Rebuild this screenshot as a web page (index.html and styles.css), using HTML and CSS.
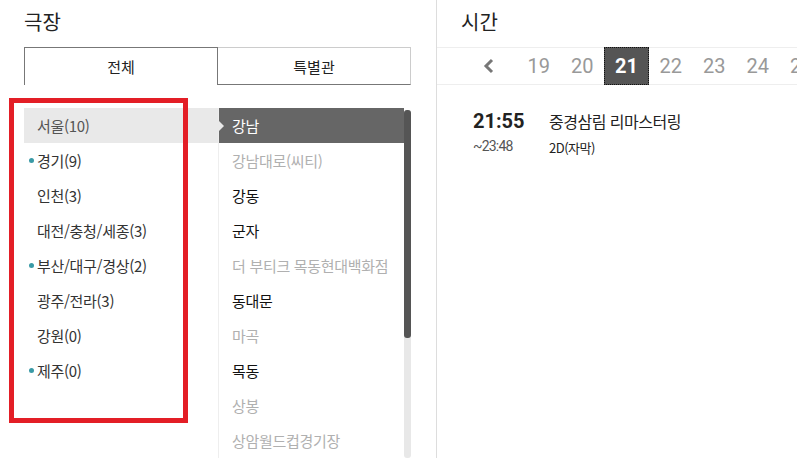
FILE: index.html
```html
<!DOCTYPE html>
<html lang="ko">
  <head>
    <meta charset="UTF-8" />
    <meta name="viewport" content="width=device-width, initial-scale=1.0" />
    <title>예매 | 극장 선택</title>
    <link rel="stylesheet" href="styles.css">
  </head>
  <body>
    <div class="page">
      <section class="theater">
        <h2 class="title">극장</h2>
        <div class="tabs">
          <div class="tab active">전체</div>
          <div class="tab">특별관</div>
        </div>
        <div class="lists">
          <ul class="regions">
            <li class="on">서울(10)</li>
            <li class="dot">경기(9)</li>
            <li>인천(3)</li>
            <li>대전/충청/세종(3)</li>
            <li class="dot">부산/대구/경상(2)</li>
            <li>광주/전라(3)</li>
            <li>강원(0)</li>
            <li class="dot">제주(0)</li>
          </ul>
          <div class="cinemas">
            <ul class="cinema-list">
              <li class="on">강남</li>
              <li class="off">강남대로(씨티)</li>
              <li>강동</li>
              <li>군자</li>
              <li class="off">더 부티크 목동현대백화점</li>
              <li>동대문</li>
              <li class="off">마곡</li>
              <li>목동</li>
              <li class="off">상봉</li>
              <li class="off">상암월드컵경기장</li>
            </ul>
            <div class="scroll"><div class="thumb"></div></div>
          </div>
        </div>
        <!-- annotation box -->
        <div class="mark"></div>
      </section>

      <section class="time">
        <h2 class="title">시간</h2>
        <div class="dates">
          <div class="prev">
            <svg width="12" height="16" viewBox="0 0 12 16">
              <path d="M9 2 L3 8 L9 14" fill="none" stroke="#777" stroke-width="3" />
            </svg>
          </div>
          <div class="day">19</div>
          <div class="day">20</div>
          <div class="day active">21</div>
          <div class="day">22</div>
          <div class="day">23</div>
          <div class="day">24</div>
          <div class="day">25</div>
        </div>
        <div class="show">
          <div class="clock">
            <strong>21:55</strong>
            <span>~23:48</span>
          </div>
          <div class="movie">
            <strong>중경삼림 리마스터링</strong>
            <span>2D(자막)</span>
          </div>
        </div>
      </section>
    </div>
  </body>
</html>
```

FILE: styles.css
```css
* {
  box-sizing: border-box;
}

html, body {
  margin: 0;
  height: 100%;
  overflow: hidden;
  background: #fff;
}

body {
  font-family: "Noto Sans CJK KR", "Noto Sans", sans-serif;
  color: #222;
}

ul {
  list-style: none;
  margin: 0;
  padding: 0;
}

.page {
  position: relative;
  display: flex;
  height: 458px;
}

.theater {
  flex: none;
  width: 437px;
  padding: 0 25px 0 24px;
  border-right: 1px solid #ddd;
}

.time {
  flex: 1;
  min-width: 0;
  overflow: hidden;
}

.title {
  margin: 0;
  height: 47px;
  padding-top: 8px;
  font-size: 20px;
  line-height: 28px;
  font-weight: 400;
  color: #222;
}

.time .title {
  padding-left: 24px;
}

/* tabs */
.tabs {
  display: flex;
  height: 38px;
}

.tab {
  flex: 1;
  display: flex;
  align-items: center;
  justify-content: center;
  font-size: 15px;
  color: #222;
  border: 1px solid #ccc;
  border-left: none;
  border-bottom: 1px solid #777;
}

.tab.active {
  border: 1px solid #777;
  border-bottom: none;
}

/* lists */
.lists {
  display: flex;
  margin-top: 23px;
}

.regions {
  width: 194px;
}

.regions li,
.cinema-list li {
  position: relative;
  height: 35px;
  display: flex;
  align-items: center;
  font-size: 15px;
  letter-spacing: -0.3px;
  white-space: nowrap;
}

.regions li {
  padding-left: 13px;
  color: #333;
}

.regions li.on {
  background: #e9e9e9;
  color: #555;
}

.regions li.on::after {
  content: "";
  position: absolute;
  right: -6px;
  top: 12px;
  border-left: 6px solid #e9e9e9;
  border-top: 6px solid transparent;
  border-bottom: 6px solid transparent;
  z-index: 2;
}

.regions li.dot::before {
  content: "";
  position: absolute;
  left: 5px;
  top: 15px;
  width: 5px;
  height: 5px;
  border-radius: 50%;
  background: #3a9aa6;
}

.cinemas {
  display: flex;
  width: 193px;
  height: 350px;
  border-left: 1px solid #eee;
}

.cinema-list {
  width: 185px;
}

.cinema-list li {
  padding-left: 13px;
  color: #111;
}

.cinema-list li.off {
  color: #b0b0b0;
}

.cinema-list li.on {
  background: #666;
  color: #fff;
}

.scroll {
  width: 7px;
  margin-top: 2px;
  background: #e8e8e8;
  border-radius: 3px;
}

.thumb {
  height: 228px;
  background: #555;
  border-radius: 3px;
}

.mark {
  position: absolute;
  left: 9px;
  top: 98px;
  width: 179px;
  height: 325px;
  border: 5px solid #e31e26;
}

/* dates */
.dates {
  display: flex;
  height: 38px;
  border-top: 1px solid #eee;
  border-bottom: 1px solid #eee;
  font-family: Roboto, "Noto Sans", sans-serif;
}

.prev {
  flex: none;
  width: 80px;
  padding-left: 46px;
  display: flex;
  align-items: center;
}

.day {
  flex: none;
  width: 43.5px;
  display: flex;
  align-items: center;
  justify-content: center;
  font-size: 20px;
  color: #999;
}

.day.active {
  margin: -1px 0;
  width: 45px;
  background: #555;
  color: #fff;
  font-weight: 700;
  outline: 1px dotted #111;
  outline-offset: -1px;
}

/* showtime */
.show {
  display: flex;
  padding: 23px 0 0 36px;
}

.clock {
  width: 76px;
  display: flex;
  flex-direction: column;
}

.clock strong {
  font-family: Roboto, sans-serif;
  font-size: 20px;
  line-height: 26px;
  font-weight: 700;
  color: #222;
}

.clock span {
  margin-top: 4px;
  font-family: Roboto, sans-serif;
  font-size: 14px;
  letter-spacing: -0.8px;
  color: #555;
}

.movie {
  display: flex;
  flex-direction: column;
}

.movie strong {
  font-size: 16px;
  line-height: 26px;
  font-weight: 400;
  letter-spacing: -0.5px;
}

.movie span {
  margin-top: 4px;
  font-size: 13px;
  letter-spacing: -0.5px;
  color: #222;
}
```
